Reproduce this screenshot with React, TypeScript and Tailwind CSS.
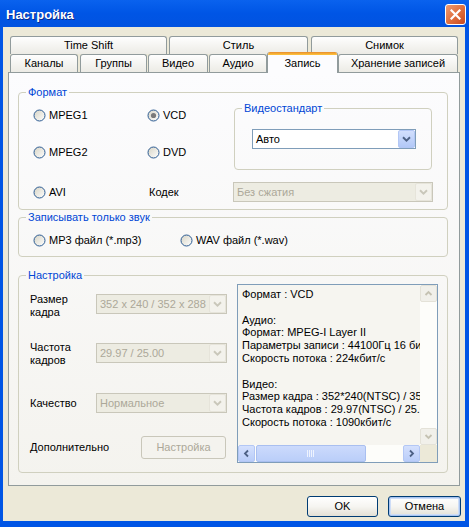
import React from "react";

function RadioIcon({ checked }: { checked?: boolean }) {
  return (
    <svg width="13" height="13" viewBox="0 0 13 13" className="shrink-0">
      <defs>
        <linearGradient id="xpRadio" x1="0" y1="0" x2="1" y2="1">
          <stop offset="0" stopColor="#D6D3C4" />
          <stop offset="1" stopColor="#FFFFFF" />
        </linearGradient>
      </defs>
      <circle cx="6.5" cy="6.5" r="5.5" fill="url(#xpRadio)" stroke="#2B5B93" strokeWidth="1" />
      {checked && <circle cx="6.5" cy="6.5" r="2.6" fill="#7A7A7A" />}
    </svg>
  );
}

function Radio({ label, checked, className }: { label: string; checked?: boolean; className?: string }) {
  return (
    <div className={"flex items-center h-[14px] " + (className ?? "")}>
      <RadioIcon checked={checked} />
      <span className="ml-[3px] leading-[13px]">{label}</span>
    </div>
  );
}

function ChevronDown({ color }: { color: string }) {
  return (
    <svg width="9" height="6" viewBox="0 0 9 6">
      <path d="M1 1.2 L4.5 4.6 L8 1.2" fill="none" stroke={color} strokeWidth="1.9" />
    </svg>
  );
}

function Combo({ text, disabled, className }: { text: string; disabled?: boolean; className?: string }) {
  return (
    <div
      className={
        "flex h-[20px] border " +
        (disabled ? "border-[#C9C7BA] bg-[#EDECE2] text-[#ACA899] " : "border-[#7F9DB9] bg-white text-black ") +
        (className ?? "")
      }
    >
      <div className="flex-1 pl-[3px] leading-[18px] overflow-hidden whitespace-nowrap">{text}</div>
      {disabled ? (
        <div className="w-[17px] h-[18px] flex items-center justify-center bg-[#F3F2EC] border border-[#E6E4DA] rounded-[2px]">
          <ChevronDown color="#C9C7BA" />
        </div>
      ) : (
        <div className="w-[17px] h-[18px] flex items-center justify-center bg-gradient-to-b from-[#D2DFFD] to-[#B2C8F7] border border-[#B3C7F5] rounded-[2px]">
          <ChevronDown color="#4D6185" />
        </div>
      )}
    </div>
  );
}

function Tab({ label, className }: { label: string; className: string }) {
  return (
    <div
      className={
        "h-full shrink-0 flex items-center justify-center border border-b-0 border-[#919B9C] rounded-t-[3px] bg-gradient-to-b from-[#FEFEFE] to-[#ECEBE5] " +
        className
      }
    >
      {label}
    </div>
  );
}

function Group({ label, className, children }: { label: string; className: string; children?: React.ReactNode }) {
  return (
    <fieldset className={"m-0 p-0 min-w-0 border border-[#D0D0BF] rounded-[4px] " + className}>
      <legend className="ml-[7px] px-[2px] leading-[13px] text-[#0046D5]">{label}</legend>
      {children}
    </fieldset>
  );
}

function ScrollArrow({ dir, enabled }: { dir: "up" | "down" | "left" | "right"; enabled: boolean }) {
  const color = enabled ? "#4D6185" : "#C5C2B2";
  const paths: Record<string, string> = {
    up: "M1.5 5 L4.5 2 L7.5 5",
    down: "M1.5 2 L4.5 5 L7.5 2",
    left: "M5 1.5 L2 4.5 L5 7.5",
    right: "M2 1.5 L5 4.5 L2 7.5",
  };
  const vert = dir === "up" || dir === "down";
  return (
    <div
      className={
        "flex items-center justify-center rounded-[2px] border " +
        (enabled
          ? "bg-gradient-to-b from-[#D4E0FD] to-[#B9CDF9] border-[#B3C7F5] "
          : "bg-[#F1F0EA] border-[#E4E2D8] ") +
        (vert ? "h-[17px] w-full" : "w-[17px] h-full")
      }
    >
      <svg width={vert ? 9 : 7} height={vert ? 7 : 9} viewBox={vert ? "0 0 9 7" : "0 0 7 9"}>
        <path d={paths[dir]} fill="none" stroke={color} strokeWidth="1.8" />
      </svg>
    </div>
  );
}

const infoLines = [
  "Формат : VCD",
  "",
  "Аудио:",
  "Формат: MPEG-I Layer II",
  "Параметры записи : 44100Гц 16 бит, стерео",
  "Скорость потока : 224кбит/с",
  "",
  "Видео:",
  "Размер кадра : 352*240(NTSC) / 352*288(PAL)",
  "Частота кадров : 29.97(NTSC) / 25.00(PAL)",
  "Скорость потока : 1090кбит/с",
];

export default function App() {
  return (
    <div className="w-[469px] h-[527px] overflow-hidden flex flex-col bg-[#0055E5] font-['Liberation_Sans',Arial,sans-serif] text-[11px] text-black">
      {/* Title bar */}
      <div className="h-[27px] shrink-0 flex items-start justify-between pl-[6px] pr-[3px] bg-gradient-to-b from-[#0A62EE] via-[#0055E5] to-[#0153E0]">
        <span className="mt-[7px] leading-[15px] text-white font-bold text-[13px] [text-shadow:1px_1px_0_#0B2B8C]">
          Настройка
        </span>
        <div className="mt-[4px] w-[21px] h-[21px] rounded-[3px] border border-white bg-gradient-to-br from-[#EC9B73] via-[#E0703F] to-[#C8491E] flex items-center justify-center">
          <svg width="11" height="11" viewBox="0 0 11 11">
            <path d="M1.5 1.5 L9.5 9.5 M9.5 1.5 L1.5 9.5" stroke="#FFFFFF" strokeWidth="2.2" strokeLinecap="square" />
          </svg>
        </div>
      </div>

      {/* Body */}
      <div className="flex-1 ml-[3px] mr-[4px] mb-[6px] bg-[#ECE9D8] flex flex-col px-[5px] pt-[9px]">
        {/* Tab row 1 */}
        <div className="h-[18px] flex">
          <Tab label="Time Shift" className="w-[157px] ml-[2px]" />
          <Tab label="Стиль" className="w-[139px] ml-[2px]" />
          <Tab label="Снимок" className="w-[147px] ml-[3px]" />
        </div>
        {/* Tab row 2 */}
        <div className="h-[18px] flex items-end">
          <Tab label="Каналы" className="w-[68px] ml-[2px]" />
          <Tab label="Группы" className="w-[67px] ml-[2px]" />
          <Tab label="Видео" className="w-[60px] ml-[1px]" />
          <Tab label="Аудио" className="w-[58px] ml-[1px]" />
          <div className="relative z-10 shrink-0 self-end w-[71px] h-[21px] -mb-px flex flex-col border-x border-[#919B9C] rounded-t-[3px] bg-[#FCFCFE] overflow-hidden">
            <div className="h-[3px] bg-gradient-to-b from-[#E68B2C] to-[#FFC73C]" />
            <div className="flex-1 flex items-center justify-center pb-[2px]">Запись</div>
          </div>
          <Tab label="Хранение записей" className="w-[120px]" />
        </div>

        {/* Tab panel */}
        <div className="h-[414px] shrink-0 border border-[#919B9C] bg-gradient-to-b from-[#FCFCFE] to-[#F4F3EE] pl-[9px] pr-[11px] pt-[13px]">
          {/* Формат */}
          <Group label="Формат" className="h-[124px]">
            <div className="pl-[14px]">
              <div className="flex items-start">
                <div className="pt-[9px] w-[201px]">
                  <div className="flex">
                    <Radio label="MPEG1" className="w-[114px]" />
                    <Radio label="VCD" checked />
                  </div>
                  <div className="flex mt-[23px]">
                    <Radio label="MPEG2" className="w-[114px]" />
                    <Radio label="DVD" />
                  </div>
                </div>
                <Group label="Видеостандарт" className="mt-[3px] w-[198px] h-[68px]">
                  <div className="pl-[17px] pt-[14px]">
                    <Combo text="Авто" className="w-[164px]" />
                  </div>
                </Group>
              </div>
              <div className="flex items-center h-[20px] mt-[12px]">
                <Radio label="AVI" className="w-[116px]" />
                <span className="w-[84px]">Кодек</span>
                <Combo text="Без сжатия" disabled className="w-[200px]" />
              </div>
            </div>
          </Group>

          {/* Записывать только звук */}
          <Group label="Записывать только звук" className="mt-[1px] h-[46px]">
            <div className="pl-[14px] pt-[9px] flex">
              <Radio label="MP3 файл (*.mp3)" className="w-[147px]" />
              <Radio label="WAV файл (*.wav)" />
            </div>
          </Group>

          {/* Настройка */}
          <Group label="Настройка" className="mt-[12px] h-[204px]">
            <div className="flex pl-[11px] pt-[2px]">
              <div className="w-[197px] pt-[9px]">
                <div className="flex items-start h-[48px]">
                  <div className="w-[66px] leading-[13px]">
                    Размер
                    <br />
                    кадра
                  </div>
                  <Combo text="352 x 240 / 352 x 288" disabled className="mt-[1px] w-[131px]" />
                </div>
                <div className="flex items-start h-[52px]">
                  <div className="w-[66px] leading-[13px]">
                    Частота
                    <br />
                    кадров
                  </div>
                  <Combo text="29.97 / 25.00" disabled className="mt-[2px] w-[131px]" />
                </div>
                <div className="flex items-center h-[20px]">
                  <div className="w-[66px]">Качество</div>
                  <Combo text="Нормальное" disabled className="w-[131px]" />
                </div>
                <div className="flex items-center h-[23px] mt-[23px]">
                  <div className="w-[111px]">Дополнительно</div>
                  <div className="w-[85px] h-[23px] flex items-center justify-center border border-[#C9C7BA] rounded-[3px] bg-[#F4F3EE] text-[#ACA899]">
                    Настройка
                  </div>
                </div>
              </div>

              {/* Info box */}
              <div className="ml-[10px] w-[201px] h-[179px] border border-[#7F9DB9] bg-[#F6F5F0] grid grid-cols-[1fr_17px] grid-rows-[1fr_17px]">
                <div className="overflow-hidden pl-[4px] pt-[3px] whitespace-pre leading-[12.8px]">
                  {infoLines.map((l, i) => (
                    <div key={i} className="h-[12.8px]">
                      {l}
                    </div>
                  ))}
                </div>
                <div className="flex flex-col bg-[#FDFDFA]">
                  <ScrollArrow dir="up" enabled={false} />
                  <div className="flex-1" />
                  <ScrollArrow dir="down" enabled={false} />
                </div>
                <div className="flex bg-[#FDFDFA]">
                  <ScrollArrow dir="left" enabled />
                  <div className="ml-[1px] w-[110px] h-full rounded-[2px] border border-[#A9BFF0] bg-gradient-to-b from-[#CCDAFC] to-[#BACEF9] flex items-center justify-center">
                    <svg width="8" height="7" viewBox="0 0 8 7">
                      <path d="M0.5 0 V7 M2.5 0 V7 M4.5 0 V7 M6.5 0 V7" stroke="#EEF3FE" strokeWidth="1" />
                    </svg>
                  </div>
                  <div className="flex-1" />
                  <ScrollArrow dir="right" enabled />
                </div>
                <div className="bg-[#ECE9D8]" />
              </div>
            </div>
          </Group>
        </div>

        {/* Buttons */}
        <div className="mt-[10px] flex justify-end -mr-[1px]">
          <div className="w-[71px] h-[21px] flex items-center justify-center border border-[#003C74] rounded-[3px] bg-gradient-to-b from-[#FFFFFF] via-[#F6F5F1] to-[#E3E0D5]">
            OK
          </div>
          <div className="ml-[10px] w-[73px] h-[21px] flex items-center justify-center border border-[#003C74] rounded-[3px] bg-gradient-to-b from-[#FFFFFF] via-[#F6F5F1] to-[#E3E0D5] shadow-[inset_0_0_0_1px_#A8C4F0,inset_0_0_0_2px_#CEDDF7]">
            Отмена
          </div>
        </div>
      </div>
    </div>
  );
}
